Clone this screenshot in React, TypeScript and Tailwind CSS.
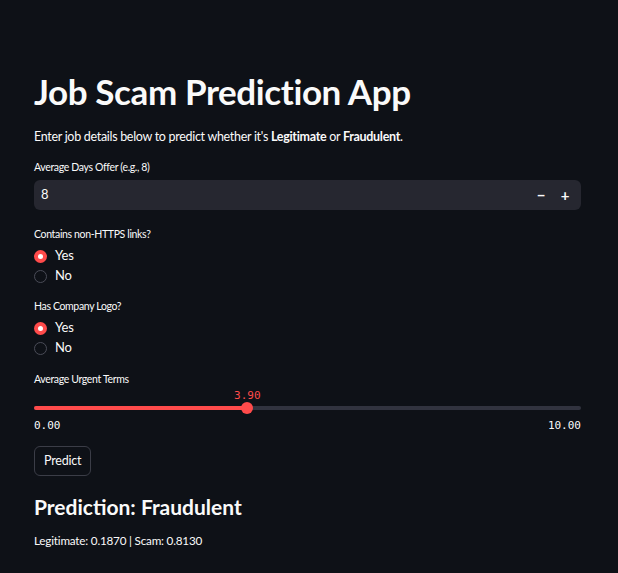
import { useState } from "react";

// ---------------------------------------------------------------------------
// Small pieces
// ---------------------------------------------------------------------------

function Radio({ label, checked }: { label: string; checked: boolean }) {
  return (
    <div className="flex items-center gap-[8px] h-[20px]">
      {checked ? (
        <span className="w-[13px] h-[13px] rounded-full bg-[#ff4b4b] flex items-center justify-center">
          <span className="w-[5px] h-[5px] rounded-full bg-white" />
        </span>
      ) : (
        <span className="w-[13px] h-[13px] rounded-full border border-[#4a4c57]" />
      )}
      <span className="text-[13px] text-[#fafafa] tracking-[-0.2px]">{label}</span>
    </div>
  );
}

function RadioGroup({ label, value }: { label: string; value: string }) {
  return (
    <div className="flex flex-col">
      <p className="text-[10.5px] tracking-[-0.35px] text-[#fafafa] leading-[14px] mb-[5px]">{label}</p>
      <Radio label="Yes" checked={value === "Yes"} />
      <Radio label="No" checked={value === "No"} />
    </div>
  );
}

// ---------------------------------------------------------------------------
// App
// ---------------------------------------------------------------------------

export default function App() {
  const [days] = useState(8);
  const urgent = 3.9;
  const pct = (urgent / 10) * 100;

  return (
    <div
      className="min-h-[573px] w-full bg-[#0e1117] text-[#fafafa] px-[34px] pt-[71px]"
      style={{ fontFamily: "Lato, 'Noto Sans', sans-serif" }}
    >
      <h1 className="text-[35px] font-bold leading-[40px] tracking-[-0.4px]">Job Scam Prediction App</h1>

      <p className="text-[12.5px] tracking-[-0.3px] mt-[17px] leading-[18px]">
        Enter job details below to predict whether it's <b>Legitimate</b> or <b>Fraudulent</b>.
      </p>

      {/* Number input */}
      <p className="text-[10.5px] tracking-[-0.35px] leading-[14px] mt-[14px]">Average Days Offer (e.g., 8)</p>
      <div className="mt-[6px] h-[30px] w-[547px] rounded-[6px] bg-[#262730] flex items-center pl-[7px] pr-[4px]">
        <span className="flex-1 text-[13px]">{days}</span>
        <span className="text-[15px] font-bold w-[24px] text-center">−</span>
        <span className="text-[15px] font-bold w-[24px] text-center">+</span>
      </div>

      <div className="mt-[17px]">
        <RadioGroup label="Contains non-HTTPS links?" value="Yes" />
      </div>
      <div className="mt-[13px]">
        <RadioGroup label="Has Company Logo?" value="Yes" />
      </div>

      {/* Slider */}
      <p className="text-[10.5px] tracking-[-0.35px] leading-[14px] mt-[14px]">Average Urgent Terms</p>
      <div className="relative w-[547px] h-[44px] mt-[2px]">
        <div className="absolute left-0 right-0 top-[18px] h-[4px] rounded-full bg-[#31333f]" />
        <div className="absolute left-0 top-[18px] h-[4px] rounded-full bg-[#ff4b4b]" style={{ width: `${pct}%` }} />
        <div
          className="absolute top-[14px] w-[12px] h-[12px] -ml-[6px] rounded-full bg-[#ff4b4b]"
          style={{ left: `${pct}%` }}
        />
        <span
          className="absolute top-0 leading-[16px] -translate-x-1/2 text-[11px] text-[#ff4b4b]"
          style={{ left: `${pct}%`, fontFamily: "'DejaVu Sans Mono', monospace" }}
        >
          3.90
        </span>
        <div
          className="absolute left-0 right-0 top-[30px] leading-[16px] flex justify-between text-[11px]"
          style={{ fontFamily: "'DejaVu Sans Mono', monospace" }}
        >
          <span>0.00</span>
          <span>10.00</span>
        </div>
      </div>

      <button className="mt-[14px] h-[30px] px-[9px] rounded-[6px] border border-[#3b3d47] bg-[#0e1117] text-[12.5px] tracking-[-0.2px]">
        Predict
      </button>

      <h2 className="text-[21px] font-bold mt-[17px] leading-[28px]">Prediction: Fraudulent</h2>
      <p className="text-[11.7px] tracking-[-0.2px] mt-[11px] pb-[20px]">Legitimate: 0.1870 | Scam: 0.8130</p>
    </div>
  );
}
